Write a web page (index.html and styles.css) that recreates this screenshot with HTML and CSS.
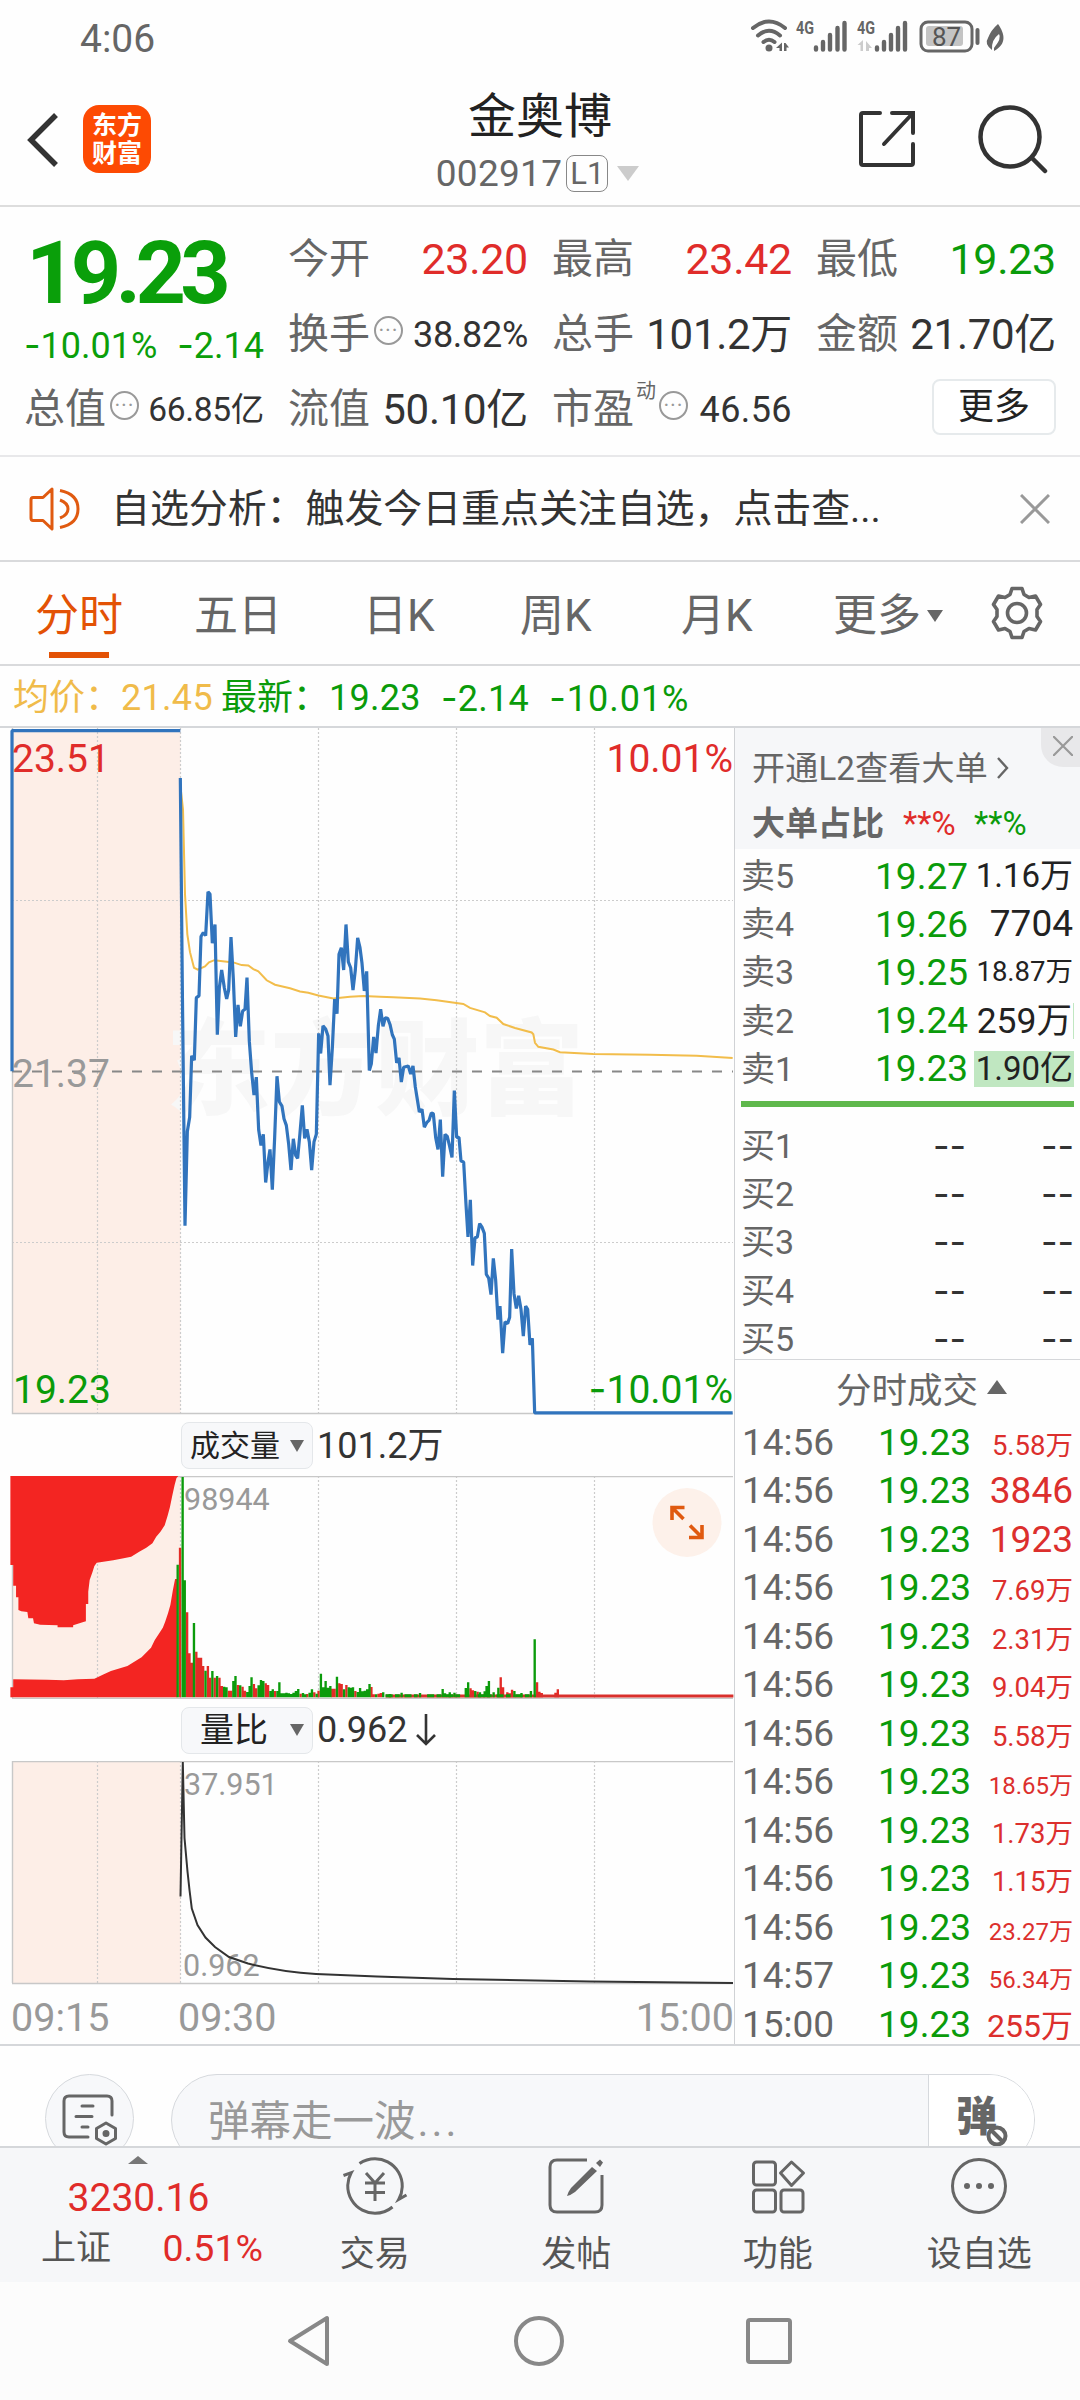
FILE: index.html
```html
<!DOCTYPE html>
<html lang="zh-CN">
<head>
<meta charset="utf-8">
<title>金奥博 002917</title>
<link rel="stylesheet" href="styles.css">
</head>
<body>
<div class="screen">
  <div class="status">
    <span class="clock">4:06</span>
    <svg width="280" height="60" viewBox="0 0 280 60">
      <g fill="none" stroke="#666" stroke-width="4" stroke-linecap="round">
        <path d="M13 18Q29 5 45 18M18 25.500Q29 16 40 25.500M23.500 32Q29 27.500 34.500 32"/>
        <path d="M76 37.500v2M83 32v7.500M90 25v14.500M97.500 18v21.500M104.500 13v26.500M137 37.500v2M144 32v7.500M151 25v14.500M158 18v21.500M165 13v26.500" stroke-width="4.400"/>
        <rect x="181" y="12" width="51" height="29" rx="7" stroke-width="3"/>
        <path d="M237.500 20v13"/>
      </g>
      <circle cx="29" cy="38" r="3.500" fill="#666"/>
      <path d="M42 32.500v8.500h-2.500v-3h-3.500zM44 41v-8h1.500l3.500 4.500h-2.500v3.500zM254 38Q262 28 259 24 251 30 252 40 244 34 248 28 251 20 258 14C265 24 267 34 254 41Z" fill="#666"/>
      <path d="M123 30v11h-2.500v-6h-3zM126 41v-10l6 7h-3v3z" fill="#ccc"/>
      <rect x="186" y="16" width="37" height="20" rx="3" fill="#c4c4c4"/>
      <text x="56" y="24" class="net" textLength="18" lengthAdjust="spacingAndGlyphs">4G</text>
      <text x="117" y="24" class="net" textLength="18" lengthAdjust="spacingAndGlyphs">4G</text>
      <text x="192" y="35.500" class="batt">87</text>
    </svg>
  </div>

  <header class="header">
    <div class="head-left">
      <svg width="32" height="54" viewBox="0 0 32 54" fill="none" stroke="#333" stroke-width="5.500"><path d="M30 2 5 27l25 25"/></svg>
      <div class="logo"><span>东方</span><span>财富</span></div>
    </div>
    <div class="head-title">
      <h1>金奥博</h1>
      <div class="code"><span>002917</span><span class="lv">L1</span><i class="caret"></i></div>
    </div>
    <div class="head-right">
      <svg width="60" height="60" viewBox="0 0 60 60" fill="none" stroke="#333" stroke-width="4"><path d="M23 4H6Q4 4 4 6V54Q4 56 6 56H54Q56 56 56 54V35M56 24V4H35M56 4 27 35" stroke-linecap="round"/></svg>
      <svg width="72" height="72" viewBox="0 0 72 72" fill="none" stroke="#333" stroke-width="4.500" stroke-linecap="round"><circle cx="34" cy="33" r="29.500"/><path d="M56 54 69 67"/></svg>
    </div>
  </header>

  <section class="quote">
    <div class="last">
      <strong>19.23</strong>
      <div class="chg"><span><b class="neg">-</b>10.01%</span><span><b class="neg">-</b>2.14</span></div>
    </div>
    <dl><dt>今开</dt><dd class="red">23.20</dd></dl>
    <dl><dt>最高</dt><dd class="red">23.42</dd></dl>
    <dl><dt>最低</dt><dd class="green">19.23</dd></dl>
    <dl><dt>换手<i class="info">···</i></dt><dd class="v-s">38.82%</dd></dl>
    <dl><dt>总手</dt><dd class="v-m">101.2万</dd></dl>
    <dl><dt>金额</dt><dd class="v-m">21.70亿</dd></dl>
    <dl><dt>总值<i class="info">···</i></dt><dd class="v-xs">66.85亿</dd></dl>
    <dl><dt>流值</dt><dd class="v-m">50.10亿</dd></dl>
    <dl><dt>市盈<sup>动</sup><i class="info">···</i></dt><dd class="v-s v-pe">46.56</dd></dl>
    <button class="more">更多</button>
  </section>

  <section class="notice">
    <svg width="52" height="46" viewBox="0 0 52 46" fill="none" stroke="#e05a10" stroke-width="3"><path d="M23 3 14 11.500H4Q2 11.500 2 14V32Q2 34.500 4 34.500H14L23 43ZM31 4.500Q49 8 49 23T31 41.500M31 14Q39 17 39 23T31 32" stroke-linejoin="round"/></svg>
    <p>自选分析：触发今日重点关注自选，点击查...</p>
    <svg width="30" height="30" viewBox="0 0 30 30" stroke="#999" stroke-width="3"><path d="M1 1 29 29M29 1 1 29"/></svg>
  </section>

  <nav class="tabs">
    <a class="on">分时</a><a>五日</a><a>日K</a><a>周K</a><a>月K</a><a class="tab-more">更多<i></i></a>
    <svg width="52" height="54" viewBox="-26 -27 52 54" fill="none" stroke="#666" stroke-width="3.600" stroke-linejoin="round"><circle r="9.500"/><path d="M-5-24.500H5L7-18.500 12-15.500 18.500-17 23.500-8.500 20-3.500V3.500L23.500 8.500 18.500 17 12 15.500 7 18.500 5 24.500H-5L-7 18.500-12 15.500-18.500 17-23.500 8.500-20 3.500V-3.500L-23.500-8.500-18.500-17-12-15.500-7-18.500Z"/></svg>
  </nav>

  <div class="legend"><span class="avg">均价：</span><span class="avg l-avg">21.45</span><span>最新：</span><span class="l-last">19.23</span><span class="l-chg"><b class="neg">-</b>2.14</span><span class="l-pct"><b class="neg">-</b>10.01%</span></div>

  <main class="board">
    <div class="charts">
      <svg class="chart" width="734" height="687" viewBox="0 0 734 687">
        <rect x="12.500" y="1" width="168" height="684.500" fill="#fdeee7"/>
        <text class="mark" x="166" y="379" textLength="418" lengthAdjust="spacingAndGlyphs">东方财富</text>
        <path class="grid" d="M97.500 0V685M180.500 0V685M318.500 0V685M456.500 0V685M594.500 0V685M12 172.500H733M12 514.500H733"/>
        <path class="axis" d="M12.500 0V685.500H733"/>
        <path d="M12 343.500H733" stroke="#888" stroke-width="2" stroke-dasharray="10 10"/>
        <g transform="translate(0 -8) scale(.33333 .44643)" fill="none">
          <polyline class="avg-line" points="543,160 549,200 555,390 562,480 570,520 582,555 593,559 615,552 627,543 643,538 700,543 725,549 745,550 760,558 775,563 800,583 825,593 870,601 900,608 925,611 955,617 1000,624 1050,620 1090,618 1140,620 1180,621 1260,624 1310,628 1390,636 1410,645 1455,655 1470,663 1490,667 1510,681 1545,690 1595,700 1600,704 1605,723 1615,732 1660,738 1680,744 1780,748 1950,750 2090,752 2198,757"/>
          <polyline class="price-line" points="36,787 36,24 541,24"/>
          <polyline class="price-line" points="541,130 547,600 555,1133 562,922 569,890 575,752 583,762 589,622 597,618 603,485 610,476 617,483 624,385 630,390 637,500 645,458 652,705 658,600 665,560 673,600 680,625 686,605 693,486 700,580 707,710 714,638 721,686 728,652 735,648 741,577 748,720 755,790 762,840 769,800 776,918 783,953 790,928 797,1036 804,990 810,962 817,1052 824,935 831,798 838,855 846,865 852,893 859,908 866,950 873,1008 880,938 887,975 893,982 900,925 907,863 914,937 921,917 928,945 935,1008 942,945 949,928 956,702 962,747 969,685 977,692 984,708 990,818 997,735 1004,625 1011,658 1017,525 1024,510 1031,560 1038,458 1045,542 1052,555 1059,605 1066,560 1073,488 1080,510 1086,545 1093,607 1100,563 1108,785 1114,770 1121,710 1128,746 1135,685 1142,648 1149,686 1156,667 1163,668 1170,682 1177,705 1183,715 1190,768 1197,757 1204,811 1211,778 1225,775 1232,793 1239,775 1246,822 1258,878 1266,872 1273,912 1280,902 1287,897 1294,880 1300,882 1307,935 1314,962 1321,895 1328,1023 1335,928 1342,933 1349,955 1356,980 1363,830 1370,935 1377,935 1383,988 1391,990 1398,1085 1404,1158 1411,1075 1418,1222 1425,1160 1432,1158 1439,1128 1446,1136 1453,1150 1459,1242 1466,1250 1473,1287 1480,1206 1487,1255 1494,1343 1500,1313 1508,1418 1515,1348 1523,1352 1529,1338 1535,1185 1542,1285 1549,1318 1556,1290 1563,1320 1570,1380 1577,1313 1583,1320 1590,1400 1597,1385 1604,1552 2198,1552"/>
        </g>
        <text x="12" y="44" class="cl red">23.51</text>
        <text x="733" y="44" class="cl red end">10.01%</text>
        <text x="12" y="359" class="cl gray">21.37</text>
        <text x="13" y="675" class="cl green">19.23</text>
        <text x="733" y="675" class="cl green end"><tspan class="neg">-</tspan>10.01%</text>
      </svg>

      <div class="indicator"><button>成交量<i></i></button><span>101.2万</span></div>

      <svg class="chart" width="734" height="223" viewBox="0 0 734 223">
        <rect x="12.500" y="1" width="168" height="221" fill="#fdeee7"/>
        <path class="grid" d="M97.500 0V222M180.500 0V222M318.500 0V222M456.500 0V222M594.500 0V222"/>
        <path class="axis" d="M12.500 222V.5H733M12 222.500H733"/>
        <g transform="translate(0 -76) scale(.47193 .33333)">
          <g fill="#f32522">
            <path d="M22 228H378L374 234 370 255 365 287 360 322 355 348 349 376 340 395 331 410 323 430 310 443 295 455 278 470 262 475 240 481 205 488 200 498 196 516 190 540 187 575V612H182V664L175 667 155 676V682H122V676L85 674 72 670 70 655H60L58 636 45 634 39 630V592H34V557H28V495H22Z"/>
            <path d="M22 892V862H28V838L100 839 135 841 165 838 200 836 220 823 235 813 270 798 300 772 320 743 328 720 335 705 345 683 350 665 356 640 361 615 366 573 371 537H376V892Z"/>
          </g>
          <path class="vol up" d="M381.500 892V443M396.500 892V637M401.500 892V760M406.500 892V788M416 892V755M421 892V773M426 892V773M430.500 892V798M440.500 892V798M445 892V833M455 892V833M465 892V833M470 892V858M485 892V872M490 892V872M504 892V855M514 892V860M519 892V872M538 892V852M543 892V865M563 892V850M568 892V855M583 892V873M637 892V881M651 892V882M666 892V877M675 892V872M704 892V866M709 892V866M719 892V850M724 892V852M734 892V855M753 892V873M787 892V861M792 892V883M802 892V881M807 892V879M997 892V865M1002 892V871M1012 892V875M1061 892V832M1066 892V862M1075 892V877M1080 892V880M1085 892V869M1138 892V847M1143 892V875M1148 892V879M1177 892V878M1182 892V868"/>
          <path d="M817 888H1554" stroke="#d9302c" stroke-width="9"/>
          <path d="M817 887H885M905 887H980M1012 887H1130" stroke="#0b9b0b" stroke-width="9" stroke-dasharray="15 5 10 10"/>
          <path class="vol down" d="M376.500 892V494M387 892V231M391.500 892V541M411 892V669M435.500 892V812M450 892V813M460 892V828M475 892V860M480 892V862M494.500 892V843M499 892V828M509 892V856M524 892V876M529 892V858M533 892V832M548 892V856M553 892V840M558 892V843M573 892V873M578 892V868M588 892V873M592 892V847M597 892V880M602 892V880M607 892V878M612 892V880M617 892V882M622 892V878M627 892V873M632 892V867M642 892V879M647 892V883M656 892V878M661 892V868M671 892V881M680 892V821M685 892V862M690 892V843M695 892V863M700 892V858M714 892V830M729 892V868M739 892V862M743 892V863M748 892V862M758 892V876M763 892V864M768 892V874M773 892V872M778 892V868M783 892V852M797 892V883M812 892V877M826 892V882M851 892V878M890 892V879M938 892V867M943 892V880M953 892V877M963 892V878M987 892V864M992 892V847M1007 892V873M1017 892V877M1027 892V874M1031 892V858M1036 892V843M1046 892V877M1056 892V863M1090 892V873M1105 892V879M1125 892V873M1133 892V718"/>
        </g>
        <text x="184" y="34" class="cs">98944</text>
        <circle cx="687" cy="46.500" r="34.500" fill="#fdf1ea"/>
        <path d="M672 44V31.500H684.500M672 31.500 683.500 43M702 49V61.500H689M702 61.500 690 49.500" fill="none" stroke="#e05a10" stroke-width="3.600"/>
      </svg>

      <div class="indicator"><button>量比<i></i></button><span>0.962</span><svg width="20" height="32" viewBox="0 0 20 32" fill="none" stroke="#333" stroke-width="2.600"><path d="M10 0V30M1 21 10 30 19 21"/></svg></div>

      <svg class="chart" width="734" height="224" viewBox="0 0 734 224">
        <rect x="12.500" y="1" width="168" height="221" fill="#fdeee7"/>
        <path class="grid" d="M97.500 0V222M180.500 0V222M318.500 0V222M456.500 0V222M594.500 0V222"/>
        <path class="axis" d="M12.500 222V.5H733M12 222.500H733"/>
        <text x="184" y="34" class="cs">37.951</text>
        <text x="183" y="215" class="cs">0.962</text>
        <path d="M180.500 135.500 182.800 1 184.500 77 187.500 110.500 189.500 129 191.800 147.500 197.500 164 205.500 176.500 215 186 229 196 248 202.500Q282 211 316 213L377 215.500 453 218 590 220.500 733 222" fill="none" stroke="#333" stroke-width="2"/>
      </svg>

      <div class="times"><span>09:15</span><span>09:30</span><span>15:00</span></div>
    </div>

    <aside class="side">
      <div class="promo">
        <div class="p1">开通L2查看大单<svg width="12" height="22" viewBox="0 0 12 22" fill="none" stroke="#666" stroke-width="2.400"><path d="M1 1 10 11 1 21"/></svg></div>
        <div class="p2"><b>大单占比</b><span class="red">**%</span><span class="green">**%</span></div>
        <div class="close"><svg width="20" height="20" viewBox="0 0 20 20" stroke="#999" stroke-width="2.200"><path d="M0 0 20 20M20 0 0 20"/></svg></div>
      </div>
      <div class="book sell">
        <div><span>卖5</span><em>19.27</em><b class="q33">1.16万</b></div>
        <div><span>卖4</span><em>19.26</em><b>7704</b></div>
        <div><span>卖3</span><em>19.25</em><b class="q27">18.87万</b></div>
        <div><span>卖2</span><em>19.24</em><b class="q36 sliver">259万</b></div>
        <div><span>卖1</span><em>19.23</em><b class="q33 hot">1.90亿</b></div>
      </div>
      <div class="ratio"></div>
      <div class="book buy">
        <div><span>买1</span><em>--</em><b>--</b></div>
        <div><span>买2</span><em>--</em><b>--</b></div>
        <div><span>买3</span><em>--</em><b>--</b></div>
        <div><span>买4</span><em>--</em><b>--</b></div>
        <div><span>买5</span><em>--</em><b>--</b></div>
      </div>
      <div class="deals-head">分时成交<i></i></div>
      <div class="deals">
        <div><span>14:56</span><em>19.23</em><b class="q28">5.58万</b></div>
        <div><span>14:56</span><em>19.23</em><b>3846</b></div>
        <div><span>14:56</span><em>19.23</em><b>1923</b></div>
        <div><span>14:56</span><em>19.23</em><b class="q28">7.69万</b></div>
        <div><span>14:56</span><em>19.23</em><b class="q28">2.31万</b></div>
        <div><span>14:56</span><em>19.23</em><b class="q28">9.04万</b></div>
        <div><span>14:56</span><em>19.23</em><b class="q28">5.58万</b></div>
        <div><span>14:56</span><em>19.23</em><b class="q24">18.65万</b></div>
        <div><span>14:56</span><em>19.23</em><b class="q28">1.73万</b></div>
        <div><span>14:56</span><em>19.23</em><b class="q28">1.15万</b></div>
        <div><span>14:56</span><em>19.23</em><b class="q24">23.27万</b></div>
        <div><span>14:57</span><em>19.23</em><b class="q24">56.34万</b></div>
        <div><span>15:00</span><em>19.23</em><b class="q31">255万</b></div>
      </div>
    </aside>
  </main>

  <section class="danmu">
    <div class="round"><svg width="56" height="52" viewBox="0 0 56 52" fill="none" stroke="#666" stroke-width="3" stroke-linecap="round"><path d="M50 21V7Q50 2 45 2H7Q2 2 2 7V38Q2 43 7 43H26M20 12H31M14 22.500H30M20 33H26"/><path d="M44 29 53.500 34.500V44.500L44 50 34.500 44.500V34.500Z" stroke-linejoin="round"/><circle cx="44" cy="39.500" r="2" fill="#666"/></svg></div>
    <div class="pill">
      <span class="hint">弹幕走一波<span class="dots">...</span></span>
      <div class="toggle"><span>弹</span><svg width="22" height="22" viewBox="0 0 22 22"><circle cx="11" cy="11" r="8.500" fill="#fff" stroke="#666" stroke-width="4"/><path d="M5 5 17 17" stroke="#666" stroke-width="4"/></svg></div>
    </div>
  </section>

  <footer class="bar">
    <div class="index">
      <i></i>
      <strong>3230.16</strong>
      <div><span>上证</span><span class="red pct">0.51%</span></div>
    </div>
    <a><svg width="66" height="60" viewBox="-33 -30 66 60" fill="none" stroke="#666" stroke-width="3"><path d="M-15.500-22.500A27.300 27.300 0 0 1 0-27.300 27.300 27.300 0 0 1 23.800 13.300L31-8.500 31 8.500" stroke="none"/><path d="M-15.500-22.500A27.300 27.300 0 0 1 0-27.300 27.300 27.300 0 0 1 23.800 13.300L31.500 9M-31.500-10.500-23.800-13.300A27.300 27.300 0 0 0 0 27.300 27.300 27.300 0 0 0 17.500 21"/><path d="M-9-13 0-3 9-13M0-3V15M-10-3H10M-10 6.500H10"/></svg>交易</a>
    <a><svg width="60" height="60" viewBox="0 0 60 60" fill="none" stroke="#666" stroke-width="3"><path d="M41 4H11Q4 4 4 11V49Q4 56 11 56H49Q56 56 56 49V19"/><path d="M46 11 51 15 29 36Q25 39 21 40 22 36 25 32ZM50 7 54 3.500 57 6.500 54 11Z" fill="#666" stroke="none"/></svg>发帖</a>
    <a><svg width="60" height="60" viewBox="0 0 60 60" fill="none" stroke="#666" stroke-width="3" stroke-linejoin="round"><rect x="5.500" y="6" width="22" height="23" rx="3"/><rect x="5.500" y="34" width="22" height="22" rx="3"/><rect x="33" y="34" width="22" height="22" rx="3"/><path d="M43.500 6 55.500 17 43.500 29.500 32.500 17Z"/></svg>功能</a>
    <a><svg width="60" height="60" viewBox="-30 -30 60 60"><circle r="26.500" fill="none" stroke="#666" stroke-width="3"/><g fill="#666"><circle cx="-12" r="3"/><circle r="3"/><circle cx="12" r="3"/></g></svg>设自选</a>
  </footer>

  <div class="sysnav">
    <svg width="46" height="54" viewBox="0 0 46 54"><path d="M41 4V50L4 27Z"/></svg>
    <svg width="54" height="54" viewBox="0 0 54 54"><circle cx="27" cy="27" r="23"/></svg>
    <svg width="46" height="46" viewBox="0 0 46 46"><rect x="2" y="2" width="42" height="42" rx="2"/></svg>
  </div>
</div>
</body>
</html>
```
FILE: styles.css
```css
* { box-sizing: border-box; margin: 0; padding: 0; }
body {
  width: 1080px;
  font-family: Roboto, "Noto Sans CJK SC", sans-serif;
  line-height: 1;
  color: #333;
  background: #fff;
}
svg { display: block; flex: none; }
i, em { font-style: normal; }
b { font-weight: 400; }
button { font: inherit; color: #222; }
.screen { width: 1080px; height: 2400px; display: flex; flex-direction: column; overflow: hidden; background: #fefefe; white-space: nowrap; }
.screen > * { flex: none; }
.red { color: #e02c2a; fill: #e02c2a; }
.green { color: #0a9b0a; fill: #0a9b0a; }
.gray { fill: #999; }
.neg { font-family: Inter, sans-serif; font-weight: 400; }

/* status bar */
.status { height: 74px; padding: 10px 60px 0 80px; display: flex; justify-content: space-between; }
.clock { font-size: 39px; color: #666; padding-top: 10px; }
.net { font: 700 19px Roboto, sans-serif; fill: #666; }
.batt { font: 400 26px Roboto, sans-serif; fill: #555; }

/* title bar */
.header { height: 133px; border-bottom: 2px solid #ddd; display: grid; grid-template-columns: 1fr auto 1fr; }
.head-left { display: flex; align-items: flex-start; gap: 25px; padding: 31px 0 0 26px; }
.head-left > svg { margin-top: 8px; }
.logo { width: 68px; height: 68px; border-radius: 16px; background: #fd4a03; color: #fff; font-size: 25px; font-weight: 700; display: flex; flex-direction: column; align-items: center; justify-content: center; gap: 3px; }
.head-title { display: flex; flex-direction: column; align-items: center; padding-top: 19px; }
h1 { font-size: 48px; font-weight: 400; color: #222; }
.code { display: flex; align-items: center; margin-top: 14px; height: 37px; font-size: 37px; color: #666; margin-right: 5px; }
.code span:first-child { letter-spacing: .3px; }
.lv { width: 42px; height: 37px; margin-left: 4px; border: 1.5px solid #888; border-radius: 8px; font-size: 31px; line-height: 36px; text-align: center; }
.caret { border: 11px solid transparent; border-top: 15px solid #ccc; border-bottom: 0; margin-left: 9px; }
.head-right { display: flex; justify-content: flex-end; gap: 59px; padding: 30px 32px 0 0; align-items: flex-start; }
.head-right svg:first-child { margin-top: 5px; }

/* quote grid */
.quote { height: 250px; padding: 15px 24px 9px; border-bottom: 2px solid #e8e8ea; display: grid; grid-template-columns: repeat(4, 240px); grid-template-rows: repeat(3, 75px); column-gap: 24px; }
.last { grid-row: span 2; color: #0a9f0a; }
.last strong { display: block; font-size: 88px; line-height: 88px; letter-spacing: -5.700px; padding: 7px 0 0 2px; }
.chg { display: flex; justify-content: space-between; margin-top: 10px; font-size: 36px; }
dl { display: flex; justify-content: space-between; align-items: center; }
dt { display: flex; align-items: center; font-size: 41px; color: #666; }
dd { font-size: 43px; letter-spacing: -.3px; }
.v-m { font-size: 42px; }
.v-s { font-size: 36px; }
.v-pe { letter-spacing: .4px; }
.v-xs { font-size: 33.500px; }
.info { width: 29px; height: 29px; margin: -8px 0 0 4px; border: 2px solid #999; border-radius: 50%; font-size: 22px; line-height: 25px; text-align: center; letter-spacing: 1px; color: #999; }
dt sup { font-size: 20px; margin: -38px -1px 0 2px; line-height: 20px; }
.more { width: 124px; height: 56px; margin-top: 7px; justify-self: end; border: 2px solid #e6eaec; border-radius: 8px; background: #fff; font-size: 36px; }

.notice { height: 105px; border-bottom: 2px solid #d9dadc; padding: 1px 30px 0 29px; display: flex; align-items: center; }
.notice p { flex: 1; padding-left: 30px; font-size: 39px; letter-spacing: -.1px; padding-top: 1px; }

/* period tabs */
.tabs { height: 104px; border-bottom: 2px solid #d9dadc; padding-left: 35px; display: grid; grid-template-columns: 159px 169px 157px 161px 152px 158px 52px; align-items: center; font-size: 44px; color: #666; }
.tabs a { height: 102px; display: flex; align-items: center; justify-self: start; padding-top: 5px; }
.tabs .on { color: #e35205; background: linear-gradient(#e35205, #e35205) 50% 90px / 60px 6px no-repeat; }
.tab-more i { border: 8px solid transparent; border-top: 12px solid #666; border-bottom: 0; margin-left: 6px; }

.legend { height: 62px; border-bottom: 2px solid #d5d7da; padding: 4px 0 0 13px; display: flex; align-items: center; font-size: 36px; color: #0a9b0a; }
.legend .avg { color: #f0bb4a; }
.l-avg { margin-right: 8px; letter-spacing: .3px; }
.l-last { margin-right: 20px; letter-spacing: .3px; }
.l-chg { margin-right: 20px; letter-spacing: .3px; }
.l-pct { letter-spacing: 1px; }

/* charts and order book */
.board { height: 1318px; display: flex; border-bottom: 2px solid #d5d7da; }
.charts { width: 735px; border-right: 1px solid #d0d2d5; }
.chart { overflow: hidden; }
.grid { stroke: #ccc; stroke-width: 1.2; stroke-dasharray: 2 2; fill: none; }
.axis { stroke: #c8c8c8; stroke-width: 1.4; fill: none; }
.avg-line { stroke: #f2bd4b; stroke-width: 2; vector-effect: non-scaling-stroke; }
.price-line { stroke: #3174bd; stroke-width: 3.2; vector-effect: non-scaling-stroke; stroke-linejoin: bevel; }
.vol { fill: none; stroke-width: 5; }
.up { stroke: #e32b26; }
.down { stroke: #0b9b0b; }
.mark { font: 900 104px "Noto Sans CJK SC", sans-serif; fill: #f7f7f7; }
.cl { font: 39px Roboto, sans-serif; }
.cs { font: 30.500px Roboto, sans-serif; fill: #999; }
.end { text-anchor: end; }
.indicator { height: 61px; padding-left: 181px; display: flex; align-items: center; font-size: 36px; }
.indicator button { width: 132px; height: 47px; padding: 0 8px; border: 1.5px solid #e4e7ea; border-radius: 8px; background: #f7f8fa; display: flex; align-items: center; justify-content: space-between; font-size: 30px; margin-right: 4px; }
.indicator i { border: 7px solid transparent; border-top: 12px solid #666; border-bottom: 0; }
.indicator ~ .indicator { height: 62px; }
.indicator ~ .indicator button { padding-left: 18px; font-size: 34px; }
.indicator svg { margin-left: 9px; }
.times { height: 60px; display: grid; grid-template-columns: 167px 1fr auto; padding: 13px 0 0 11px; font-size: 39.500px; color: #999; }

.side { width: 345px; }
.promo { height: 121px; background: #f6f7f9; padding: 23px 0 0 17px; color: #666; font-size: 33px; position: relative; }
.p1 { display: flex; align-items: center; height: 34px; gap: 9px; letter-spacing: .2px; }
.p2 { display: flex; margin-top: 22px; }
.p2 b { font-weight: 700; width: 151px; }
.p2 span { width: 71px; }
.close { position: absolute; right: 0; top: 0; width: 39px; height: 39px; border-bottom-left-radius: 22px; background: #e8e8ea; padding: 8px 0 0 12px; }
.book > div { height: 48.200px; display: grid; grid-template-columns: 90px 137px 1fr; align-items: center; padding: 0 6px 0 6px; }
.book span { font-size: 34px; color: #666; }
.book em { font-size: 37px; text-align: right; color: #0a9b0a; }
.book b { font-size: 37px; color: #222; text-align: right; justify-self: end; }
.sell { padding-top: 3px; }
.sell b { height: 36px; line-height: 36px; padding-right: 1px; }
.book .q33 { font-size: 33px; }
.book .q36 { font-size: 35.500px; }
.book .q27 { font-size: 27.500px; }
.hot { background: #c0e7c1; padding-left: 2px; }
.sliver { border-right: 1px solid #c0e7c1; }
.ratio { height: 6px; margin: 8px 6px 15px; background: #5fb84c; }
.buy em, .buy b { color: #333; font-family: Inter, sans-serif; font-size: 36px; }
.buy em { padding-right: 2px; }
.deals-head { height: 57px; margin-top: -4px; border-top: 1px solid #d5d7da; display: flex; align-items: center; justify-content: center; gap: 9px; font-size: 35.500px; color: #666; padding: 7px 0 0 28px; }
.deals-head i { border: 10.500px solid transparent; border-bottom: 14px solid #666; border-top: 0; margin-top: -8px; }
.deals { padding-top: 3px; }
.deals > div { height: 48.500px; display: grid; grid-template-columns: 90px 139px 1fr; align-items: baseline; line-height: 48.500px; padding: 0 7px 0 7px; font-size: 37px; }
.deals span { color: #666; }
.deals em { color: #0a9b0a; text-align: right; }
.deals b { color: #dc2f2d; text-align: right; }
.deals .q28 { font-size: 27.500px; }
.deals .q24 { font-size: 24px; }
.deals .q31 { font-size: 32px; }

/* comment strip, cut by the tab bar */
.danmu { height: 100px; padding: 28px 45px 0; display: flex; gap: 37px; overflow: hidden; align-items: flex-start; }
.round { width: 89px; height: 89px; border: 1.5px solid #d6d9dd; border-radius: 50%; background: #f7f8fa; display: flex; align-items: center; justify-content: center; padding-top: 3px; }
.pill { flex: 1; height: 92px; border: 1.5px solid #d6d9dd; border-radius: 46px; background: #f7f8fa; overflow: hidden; display: flex; }
.hint { flex: 1; font-size: 41.500px; line-height: 93px; padding-left: 36px; color: #999; }
.dots { letter-spacing: 3px; padding-left: 2px; }
.toggle { width: 106px; border-left: 1.5px solid #d6d9dd; background: #fff; display: flex; padding: 22px 0 0 27px; }
.toggle span { font-size: 41px; font-weight: 900; color: #666; }
.toggle svg { margin: 28px 0 0 -11px; }

.bar { height: 136px; background: #f6f7f9; border-top: 2px solid #d5d7da; display: grid; grid-template-columns: 274px repeat(4, 201.500px); color: #555; }
.index { display: flex; flex-direction: column; align-items: center; }
.index i { border: 10px solid transparent; border-bottom: 8px solid #777; border-top: 0; margin: 8px 0 15px 2px; }
.index strong { font-size: 39px; font-weight: 400; color: #e02c2a; padding-left: 3px; }
.index div { width: 222px; display: flex; justify-content: space-between; align-items: center; margin: 12px 0 0 30px; font-size: 35px; }
.pct { font-size: 37.500px; }
.bar a { display: flex; flex-direction: column; align-items: center; font-size: 35px; gap: 21px; padding-top: 8px; }

.sysnav { height: 118px; background: #fcfcfc; display: flex; align-items: center; padding: 0 288px 0 286px; justify-content: space-between; }
.sysnav svg { fill: none; stroke: #888; stroke-width: 4; stroke-linejoin: round; }
```
